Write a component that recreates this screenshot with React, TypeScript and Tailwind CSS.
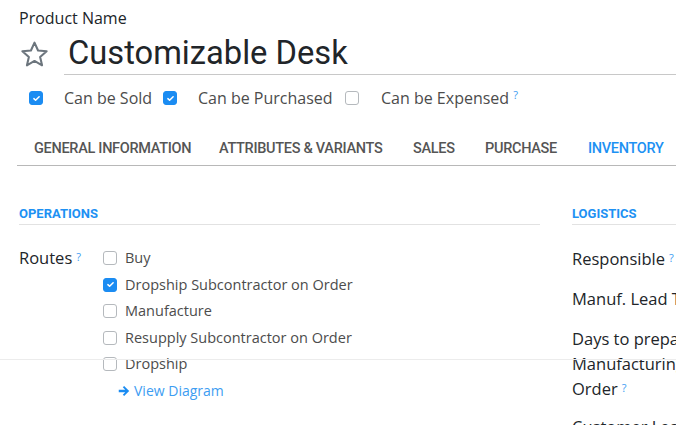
import React from "react";

const body = { fontFamily: "'Open Sans', 'Noto Sans', sans-serif" };
const heading = { fontFamily: "Roboto, 'Noto Sans', sans-serif" };

function Check({ checked }: { checked?: boolean }) {
  return (
    <span
      className={`inline-flex w-[14px] h-[14px] shrink-0 items-center justify-center rounded-[3px] border ${
        checked ? "bg-[#1b8cf2] border-[#1b8cf2]" : "bg-white border-[#b5b9bd]"
      }`}
    >
      {checked && (
        <svg viewBox="0 0 12 12" className="w-[9px] h-[9px]" fill="none" stroke="white" strokeWidth={2}>
          <path d="M2.5 6.2l2.3 2.2 4.7-4.8" strokeLinecap="round" strokeLinejoin="round" />
        </svg>
      )}
    </span>
  );
}

function Help() {
  return <sup className="ml-[4px] text-[11px] text-[#3d9df2] relative -top-[3px]">?</sup>;
}

const tabs = [
  { label: "GENERAL INFORMATION", w: "w-[185px]" },
  { label: "ATTRIBUTES & VARIANTS", w: "w-[194px]" },
  { label: "SALES", w: "w-[72px]" },
  { label: "PURCHASE", w: "w-[103px]" },
  { label: "INVENTORY", w: "w-[100px]", active: true },
];

const routes = [
  { label: "Buy" },
  { label: "Dropship Subcontractor on Order", checked: true },
  { label: "Manufacture" },
  { label: "Resupply Subcontractor on Order" },
  { label: "Dropship" },
];

export default function App() {
  return (
    <div className="relative w-[676px] h-[425px] overflow-hidden bg-white text-[#212529]" style={body}>
      <div className="pl-[19px] pt-[8px]">
        <div className="text-[16px] leading-[20px]">Product Name</div>
        <div className="flex items-center mt-[6px]">
          <svg viewBox="0 0 24 24" className="w-[31px] h-[31px] shrink-0" fill="none" stroke="#6c757d" strokeWidth={1.6}>
            <path
              d="M12 2.8l2.75 6.1 6.65.6-5.05 4.4 1.5 6.5L12 17l-5.85 3.4 1.5-6.5L2.6 9.5l6.65-.6z"
              strokeLinejoin="round"
            />
          </svg>
          <div className="ml-[14px] flex-1 border-b border-[#c8c8c8] pl-[4px] pb-[2px]" style={heading}>
            <span className="text-[32.7px] leading-[38px]">Customizable Desk</span>
          </div>
        </div>
        <div className="flex items-center mt-[12px] pl-[10px] text-[16px] leading-[22px] text-[#4c4c4c]">
          <Check checked />
          <span className="ml-[21px] w-[99px]">Can be Sold</span>
          <Check checked />
          <span className="ml-[21px] w-[147px]">Can be Purchased</span>
          <Check />
          <span className="ml-[22px]">Can be Expensed</span>
          <Help />
        </div>
      </div>

      <div
        className="ml-[17px] mt-[20px] flex border-b border-[#b8b8b8] pl-[17px] pt-[4px] h-[37px] items-center"
        style={heading}
      >
        {tabs.map((t) => (
          <span
            key={t.label}
            className={`${t.w} shrink-0 text-[14.5px] font-medium tracking-[-0.3px] ${
              t.active ? "text-[#1d91f3]" : "text-[#555]"
            }`}
          >
            {t.label}
          </span>
        ))}
      </div>

      <div className="flex pl-[19px] mt-[40px] gap-[32px]">
        <div className="w-[521px] shrink-0">
          <div
            className="text-[13px] leading-[16px] font-bold text-[#1d91f3] border-b border-[#e2e2e2] pb-[2px]"
            style={heading}
          >
            OPERATIONS
          </div>
          <div className="flex mt-[20px]">
            <div className="w-[84px] shrink-0 pt-[2px] text-[16.5px] leading-[22px]">
              Routes
              <Help />
            </div>
            <div className="flex flex-col text-[14.5px] text-[#4c4c4c]">
              {routes.map((r) => (
                <label key={r.label} className="flex items-center gap-[8px] h-[26.5px] leading-[20px]">
                  <Check checked={r.checked} />
                  <span>{r.label}</span>
                </label>
              ))}
              <div className="flex items-center ml-[15px] h-[26px] text-[14px] text-[#3d9df2]">
                <svg viewBox="0 0 16 16" className="w-[12px] h-[12px] mr-[4px]" fill="#1b8cf2">
                  <path d="M1 6.3h8.6L6.4 3.1 8.2 1.3 14.9 8l-6.7 6.7-1.8-1.8 3.2-3.2H1z" />
                </svg>
                View Diagram
              </div>
            </div>
          </div>
        </div>
        <div className="flex-1 whitespace-nowrap overflow-hidden">
          <div
            className="text-[13px] leading-[16px] font-bold text-[#1d91f3] border-b border-[#e2e2e2] pb-[2px]"
            style={heading}
          >
            LOGISTICS
          </div>
          <div className="mt-[21px] text-[16.5px] leading-[25px]">
            <div>
              Responsible
              <Help />
            </div>
            <div className="mt-[15px]">Manuf. Lead Time</div>
            <div className="mt-[15px]">Days to prepare</div>
            <div>Manufacturing</div>
            <div>
              Order
              <Help />
            </div>
            <div className="mt-[13px]">Customer Lead Time</div>
          </div>
        </div>
      </div>

      <div className="absolute left-0 right-0 top-[359px] h-px bg-[#ececec]" />
    </div>
  );
}
